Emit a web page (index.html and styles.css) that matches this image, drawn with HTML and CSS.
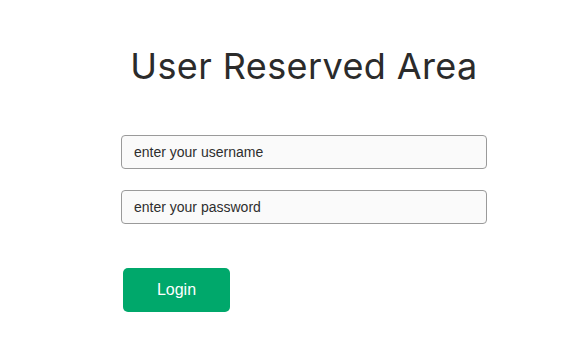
FILE: index.html
```html
<!DOCTYPE html>
<html>
<head>
<meta charset="utf-8">
<link rel="stylesheet" href="styles.css">
</head>
<body>
<main class="area">
  <h1 class="title">User Reserved Area</h1>
  <form class="form">
    <input class="field" type="text" placeholder="enter your username">
    <input class="field" type="password" placeholder="enter your password">
    <button class="login" type="button">Login</button>
  </form>
</main>
</body>
</html>
```
FILE: styles.css
```css
html, body {
  margin: 0;
  padding: 0;
  background: #ffffff;
}
.area {
  width: 366px;
  margin-left: 121px;
  padding-top: 40px;
  display: flex;
  flex-direction: column;
}
.title {
  margin: 0;
  text-align: center;
  font-family: Inter, "DejaVu Sans", sans-serif;
  font-weight: 400;
  font-size: 36px;
  line-height: 52px;
  color: #2b2b2b;
  letter-spacing: 0.4px;
}
.form {
  margin-top: 43px;
  display: flex;
  flex-direction: column;
  align-items: flex-start;
}
.field {
  box-sizing: border-box;
  width: 366px;
  height: 34px;
  margin: 0 0 21px 0;
  padding: 0 12px;
  border: 1px solid #9a9a9a;
  border-radius: 4px;
  background: #fafafa;
  font-family: "Liberation Sans", Arial, sans-serif;
  font-size: 14px;
  color: #333;
}
.field::placeholder {
  color: #2e2e2e;
  opacity: 1;
}
.login {
  margin-top: 23px;
  margin-left: 2px;
  width: 107px;
  height: 44px;
  border: none;
  border-radius: 5px;
  background: #00a86b;
  color: #ffffff;
  font-family: "Liberation Sans", Arial, sans-serif;
  font-size: 16px;
}
```
